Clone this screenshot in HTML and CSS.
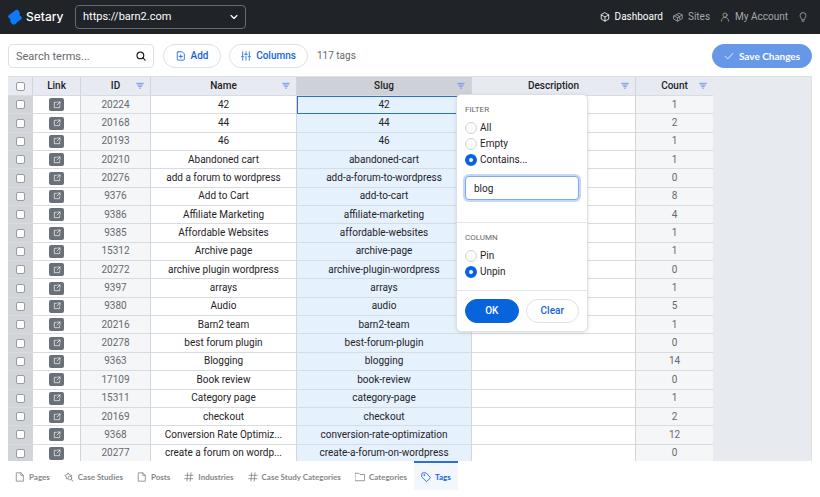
FILE: index.html
```html
<!DOCTYPE html>
<html lang="en">
<head>
<meta charset="utf-8">
<title>Setary</title>
<link rel="stylesheet" href="styles.css">
</head>
<body>
<svg class="sprite" aria-hidden="true">
  <symbol id="i-cube" viewBox="0 0 24 24"><path d="M12 2 21 7v10l-9 5-9-5V7zM3 7l9 5 9-5M12 12v10"/></symbol>
  <symbol id="i-box" viewBox="0 0 24 24"><path d="M2 9.500 14 3l8 4v9l-11 6-9-5zM2 9.500l9 4.500 11-7M11 14v8M8 6.500l8 4.500v5"/></symbol>
  <symbol id="i-user" viewBox="0 0 24 24"><circle cx="12" cy="7.500" r="5"/><path d="M3.500 22c0-6 4-9 8.500-9s8.500 3 8.500 9"/></symbol>
  <symbol id="i-bulb" viewBox="0 0 24 24"><path d="M9 18c0-3-4-5-4-9.500a7 7 0 0 1 14 0C19 13 15 15 15 18zM9.500 22h5"/></symbol>
  <symbol id="i-search" viewBox="0 0 24 24"><circle cx="10.500" cy="10.500" r="8"/><path d="m16 16 6 6"/></symbol>
  <symbol id="i-chevron" viewBox="0 0 24 24"><path d="m5 8.500 7 7 7-7"/></symbol>
  <symbol id="i-add" viewBox="0 0 24 24"><path d="M5 2h10l5 5v13a2 2 0 0 1-2 2H5a2 2 0 0 1-2-2V4a2 2 0 0 1 2-2zM11.500 9v8M7.500 13h8"/></symbol>
  <symbol id="i-sliders" viewBox="0 0 24 24"><path d="M4 2v12M4 18v4M1 14h6M12 2v6M12 12v10M9 8h6M20 2v12M20 18v4M17 14h6"/></symbol>
  <symbol id="i-check" viewBox="0 0 24 24"><path d="m3 13 6 6L21 6"/></symbol>
  <symbol id="i-filter" viewBox="0 0 24 24"><path d="M2 4h20M5 9h14M8 14h8M11 19h2"/></symbol>
  <symbol id="i-open" viewBox="0 0 24 24"><path d="M10 4H4v16h16v-6M14 3h7v7M21 3l-9 9"/></symbol>
  <symbol id="i-page" viewBox="0 0 24 24"><path d="M4 2h10l6 6v14H4zM14 2v6h6"/></symbol>
  <symbol id="i-case" viewBox="0 0 24 24"><path d="M8 16H5l1-4-4-4 5-1 3-5 3 5 6 1-2 3M17 18l5 4"/><circle cx="14" cy="14.500" r="4.500"/></symbol>
  <symbol id="i-hash" viewBox="0 0 24 24"><path d="M9 2 7 22M17 2l-2 20M3 8h19M2 16h19"/></symbol>
  <symbol id="i-folder" viewBox="0 0 24 24"><path d="M1 3h8l3 3h11v15H1z"/></symbol>
  <symbol id="i-tag" viewBox="0 0 24 24"><path d="M2 4a2 2 0 0 1 2-2h8l10 10.500a2 2 0 0 1 0 2L15 22a2 2 0 0 1-3 0L2 12z"/><circle cx="7.500" cy="7.500" r="1"/></symbol>
</svg>

<header class="topbar">
  <a class="brand" href="#">
    <svg class="logo" viewBox="0 0 28 32" aria-hidden="true"><path d="M13 4q4-4 8-1l2 4q1 2 0 5l4 4q2 3-1 5l-7 5-4 4q-4 3-7 0l-3-4q-1-2 0-5l-4-4q-2-3 1-5z"/></svg>
    <span>Setary</span>
  </a>
  <div class="site-picker">
    <select aria-label="Site"><option>https://barn2.com</option></select>
    <svg class="icon"><use href="#i-chevron"/></svg>
  </div>
  <nav class="main-nav" aria-label="Main">
    <a class="current" href="#"><svg class="icon"><use href="#i-cube"/></svg>Dashboard</a>
    <a href="#"><svg class="icon"><use href="#i-box"/></svg>Sites</a>
    <a href="#"><svg class="icon"><use href="#i-user"/></svg>My Account</a>
    <a href="#" aria-label="Tips"><svg class="icon"><use href="#i-bulb"/></svg></a>
  </nav>
</header>

<div class="toolbar">
  <div class="search">
    <input type="text" placeholder="Search terms..." aria-label="Search terms">
    <svg class="icon"><use href="#i-search"/></svg>
  </div>
  <button class="pill add" type="button"><svg class="icon"><use href="#i-add"/></svg>Add</button>
  <button class="pill columns" type="button"><svg class="icon"><use href="#i-sliders"/></svg>Columns</button>
  <span class="total">117 tags</span>
  <button class="pill save" type="button"><svg class="icon"><use href="#i-check"/></svg>Save Changes</button>
</div>

<main class="sheet">
  <table>
    <colgroup><col class="w-check"><col class="w-link"><col class="w-id"><col class="w-name"><col class="w-slug"><col class="w-desc"><col class="w-count"></colgroup>
    <thead>
      <tr>
        <th><input class="tick" type="checkbox" aria-label="Select all"></th>
        <th>Link</th>
        <th>ID<button class="filter" type="button" aria-label="Filter ID"><svg class="icon"><use href="#i-filter"/></svg></button></th>
        <th>Name<button class="filter" type="button" aria-label="Filter Name"><svg class="icon"><use href="#i-filter"/></svg></button></th>
        <th class="active">Slug<button class="filter" type="button" aria-label="Filter Slug"><svg class="icon"><use href="#i-filter"/></svg></button>
          <form class="popover">
            <fieldset>
              <legend>FILTER</legend>
              <label><input type="radio" name="filter">All</label>
              <label><input type="radio" name="filter">Empty</label>
              <label><input type="radio" name="filter" checked>Contains...</label>
              <input class="term" type="text" value="blog" aria-label="Contains text">
            </fieldset>
            <fieldset>
              <legend>COLUMN</legend>
              <label><input type="radio" name="pin">Pin</label>
              <label><input type="radio" name="pin" checked>Unpin</label>
            </fieldset>
            <div class="actions">
              <button class="pill ok" type="button">OK</button>
              <button class="pill" type="button">Clear</button>
            </div>
          </form>
        </th>
        <th>Description<button class="filter" type="button" aria-label="Filter Description"><svg class="icon"><use href="#i-filter"/></svg></button></th>
        <th>Count<button class="filter" type="button" aria-label="Filter Count"><svg class="icon"><use href="#i-filter"/></svg></button></th>
      </tr>
    </thead>
    <tbody id="rows"></tbody>
  </table>
</main>

<nav class="tabs" aria-label="Content types">
  <a href="#"><svg class="icon"><use href="#i-page"/></svg>Pages</a>
  <a href="#"><svg class="icon"><use href="#i-case"/></svg>Case Studies</a>
  <a href="#"><svg class="icon"><use href="#i-page"/></svg>Posts</a>
  <a href="#"><svg class="icon"><use href="#i-hash"/></svg>Industries</a>
  <a href="#"><svg class="icon"><use href="#i-hash"/></svg>Case Study Categories</a>
  <a href="#"><svg class="icon"><use href="#i-folder"/></svg>Categories</a>
  <a class="current" href="#"><svg class="icon"><use href="#i-tag"/></svg>Tags</a>
</nav>
<script src="rows.js"></script>
</body>
</html>
```
FILE: styles.css
```css
* { box-sizing: border-box; }

body {
  margin: 0;
  min-height: 100vh;
  display: flex;
  flex-direction: column;
  background: #fff;
  color: #1f2327;
  font: 10px/16px Roboto, "Liberation Sans", sans-serif;
}

a { color: inherit; text-decoration: none; }
button, input, select { font: inherit; color: inherit; margin: 0; }
.sprite { position: absolute; width: 0; height: 0; }

.icon {
  width: 10px;
  height: 10px;
  flex: none;
  fill: none;
  stroke: currentColor;
  stroke-width: 2;
  stroke-linecap: round;
  stroke-linejoin: round;
}

/* Top bar */
.topbar {
  display: flex;
  align-items: center;
  height: 34px;
  padding: 0 12px 0 8px;
  background: #202327;
  color: #fff;
}
.brand {
  display: flex;
  align-items: center;
  gap: 4px;
  width: 67px;
  font-family: Inter, "Liberation Sans", sans-serif;
  font-size: 12px;
  font-weight: 500;
}
.logo { width: 14px; height: 16px; fill: #0b7bf7; }
.site-picker { display: grid; width: 171px; align-items: center; }
.site-picker > * { grid-area: 1 / 1; }
.site-picker select {
  appearance: none;
  width: 100%;
  height: 24px;
  padding: 0 7px;
  border: 1px solid #676a6e;
  border-radius: 4px;
  background: #202327;
  font-size: 11px;
}
.site-picker .icon { justify-self: end; margin-right: 7px; pointer-events: none; stroke-width: 3; }
.main-nav { display: flex; gap: 10px; margin-left: auto; color: #a6a8aa; }
.main-nav a { display: flex; align-items: center; gap: 5px; }
.main-nav .current { color: #fff; }

/* Toolbar */
.toolbar { display: flex; align-items: center; gap: 8px; padding: 10px 8px 8px; }
.search { display: grid; align-items: center; width: 146px; margin-right: 1px; }
.search > * { grid-area: 1 / 1; }
.search input {
  width: 100%;
  height: 24px;
  padding: 0 7px;
  border: 1px solid #dfe2e5;
  border-radius: 4px;
  font-size: 11px;
}
.search input::placeholder { color: #66696d; opacity: 1; }
.search .icon { justify-self: end; margin-right: 8px; stroke-width: 3; }
.pill {
  display: flex;
  align-items: center;
  justify-content: center;
  gap: 5px;
  height: 24px;
  padding: 0 12px;
  border: 1px solid #dfe2e5;
  border-radius: 12px;
  background: #fff;
  color: #1463d6;
  font-weight: 500;
}
.add { width: 58px; }
.columns { width: 79px; padding: 0; }
.total { margin-left: 1px; color: #66696d; }
.save {
  width: 100px;
  margin-left: auto;
  padding: 0;
  border-color: #6798e8;
  background: #6798e8;
  color: #fff;
  font-family: Lato, "Liberation Sans", sans-serif;
  font-weight: 700;
}

/* Spreadsheet */
.sheet {
  flex: 1;
  display: flex;
  margin: 0 8px;
  overflow: hidden;
  border-top: 1px solid #dcdfe3;
  border-right: 1px solid #dcdfe3;
  background: #e7eaef;
}
table {
  flex: none;
  width: 705px;
  margin-bottom: -2px;
  table-layout: fixed;
  border-collapse: separate;
  border-spacing: 0;
}
.w-check { width: 25px; }
.w-link { width: 48px; }
.w-id { width: 70px; }
.w-name { width: 146px; }
.w-slug { width: 175px; }
.w-desc { width: 164px; }
.w-count { width: 77px; }
th, td {
  position: relative;
  padding: 0;
  border-right: 1px solid #d2d6dc;
  border-bottom: 1px solid #d8dbe0;
  text-align: center;
  white-space: nowrap;
}
th { height: 19px; background: #e7eaf1; font-weight: 500; }
td { background: #fff; }
th:last-child, td:last-child { border-right: 0; }
.active { background: #ced1d7; }
td:first-child { background: #d1d4d9; }
td:nth-child(3), td:last-child { background: #f5f6f8; color: #66696d; }
td:nth-child(5) { background: #e5f1fd; }
tr:first-child td:nth-child(5) { outline: 1px solid #2f6fca; outline-offset: -1px; }
.tick {
  appearance: none;
  display: block;
  width: 9px;
  height: 9px;
  margin: 0 auto;
  border: 1px solid #989ba0;
  border-radius: 2px;
  background: #fff;
}
.filter {
  position: absolute;
  right: 6px;
  top: 5px;
  display: flex;
  padding: 0;
  border: 0;
  background: none;
  color: #739be8;
}
.filter .icon { width: 8px; height: 8px; stroke-width: 3; }
.open {
  display: flex;
  align-items: center;
  justify-content: center;
  width: 15px;
  height: 13px;
  margin: 0 auto;
  border-radius: 2px;
  background: #6a7078;
  color: #fff;
}
.open .icon { width: 8px; height: 8px; }

/* Column menu */
.popover {
  position: absolute;
  z-index: 1;
  top: 17px;
  left: 159px;
  width: 132px;
  border: 1px solid #dcdfe3;
  border-radius: 5px;
  background: #fff;
  box-shadow: 0 1px 4px #0000001a;
  font-weight: 400;
  text-align: left;
}
.popover fieldset {
  display: flow-root;
  margin: 0;
  padding: 7px 8px 10px;
  border: 0;
  border-bottom: 1px solid #e3e5e8;
}
.popover legend { float: left; width: 100%; margin-bottom: 2px; padding: 0; color: #66696d; font-size: 8px; }
.popover label { display: flex; clear: both; align-items: center; gap: 3px; }
.popover [type="radio"] {
  appearance: none;
  width: 12px;
  height: 12px;
  border: 1px solid #cfd2d5;
  border-radius: 50%;
  background: #fff;
}
.popover [type="radio"]:checked { border: 4px solid #0764dc; }
.term {
  display: block;
  width: 100%;
  height: 24px;
  margin: 8px 0 12px;
  padding: 0 8px;
  border: 1px solid #80a9ec;
  border-radius: 4px;
  box-shadow: 0 0 0 2px #c5d8f8;
}
.actions { display: flex; gap: 7px; padding: 8px; }
.actions .pill { flex: 1; padding: 0; }
.actions .ok { border-color: #0764dc; background: #0764dc; color: #fff; }

/* Content type tabs */
.tabs {
  display: flex;
  height: 36px;
  padding: 0 8px 7px;
  color: #858789;
  font-family: Lato, "Liberation Sans", sans-serif;
  font-size: 8px;
  font-weight: 700;
}
.tabs a { display: flex; align-items: center; gap: 4px; padding: 0 7px; border-top: 2px solid transparent; }
.tabs .current { border-color: #2e6fd4; background: #f2f6fd; color: #1463d6; }
```
FILE: rows.js
```js
const tags = [
  [20224, "42", "42", 1],
  [20168, "44", "44", 2],
  [20193, "46", "46", 1],
  [20210, "Abandoned cart", "abandoned-cart", 1],
  [20276, "add a forum to wordpress", "add-a-forum-to-wordpress", 0],
  [9376, "Add to Cart", "add-to-cart", 8],
  [9386, "Affiliate Marketing", "affiliate-marketing", 4],
  [9385, "Affordable Websites", "affordable-websites", 1],
  [15312, "Archive page", "archive-page", 1],
  [20272, "archive plugin wordpress", "archive-plugin-wordpress", 0],
  [9397, "arrays", "arrays", 1],
  [9380, "Audio", "audio", 5],
  [20216, "Barn2 team", "barn2-team", 1],
  [20278, "best forum plugin", "best-forum-plugin", 0],
  [9363, "Blogging", "blogging", 14],
  [17109, "Book review", "book-review", 0],
  [15311, "Category page", "category-page", 1],
  [20169, "checkout", "checkout", 2],
  [9368, "Conversion Rate Optimiz...", "conversion-rate-optimization", 12],
  [20277, "create a forum on wordp...", "create-a-forum-on-wordpress", 0]
];

document.getElementById("rows").innerHTML = tags.map(([id, name, slug, count]) => `
  <tr>
    <td><input class="tick" type="checkbox" aria-label="Select ${id}"></td>
    <td><a class="open" href="#" aria-label="Open ${id}"><svg class="icon"><use href="#i-open"/></svg></a></td>
    <td>${id}</td><td>${name}</td><td>${slug}</td><td></td><td>${count}</td>
  </tr>`).join("");
```
